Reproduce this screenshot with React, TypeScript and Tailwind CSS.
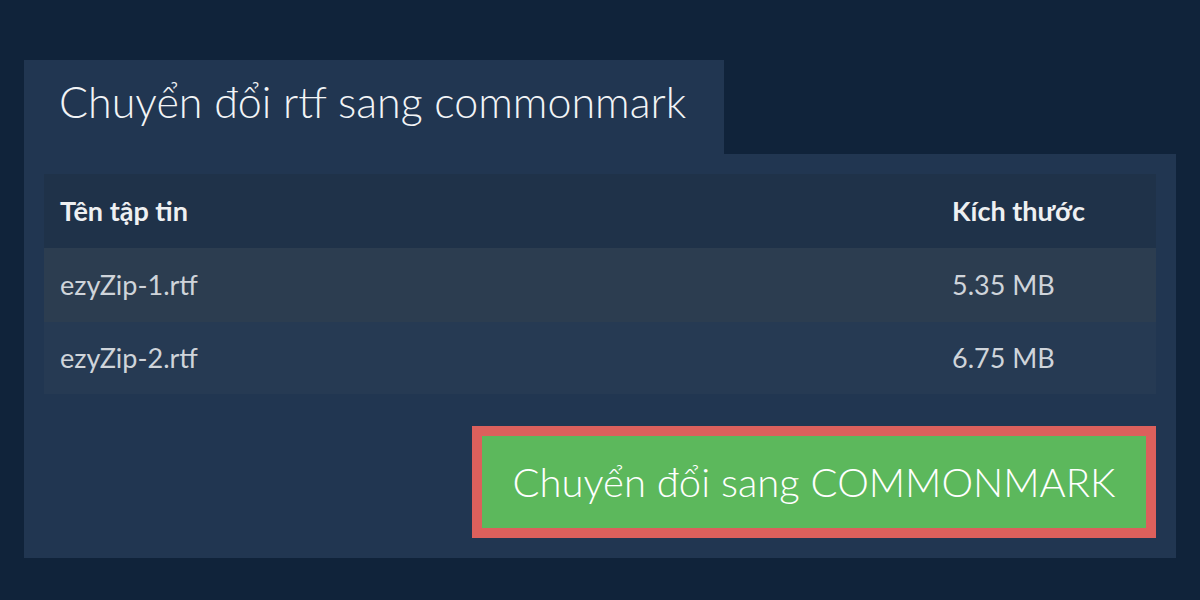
import React from 'react';

const files = [
    { name: 'ezyZip-1.rtf', size: '5.35 MB' },
    { name: 'ezyZip-2.rtf', size: '6.75 MB' },
];

const App: React.FC = () => {
    return (
        <div className="w-[1200px] h-[600px] bg-[#10233a] pt-[60px] px-[24px] font-['Lato','Noto_Sans',sans-serif]">
            {/* Tab heading */}
            <div className="w-[700px] h-[94px] bg-[#213651] pl-[35px] flex items-center">
                <h1 className="text-[43px] font-light text-[#f2f4f6] leading-none -mt-[12px]">Chuyển đổi rtf sang commonmark</h1>
            </div>

            {/* Panel */}
            <div className="w-[1152px] bg-[#213651] p-[20px] flex flex-col">
                <div className="w-full">
                    <div className="h-[74px] bg-[#1f3249] flex items-center text-[27px] font-bold text-[#eef0f2]">
                        <span className="pl-[16px] flex-1">Tên tập tin</span>
                        <span className="w-[204px]">Kích thước</span>
                    </div>
                    {files.map((f, i) => (
                        <div
                            key={f.name}
                            className={`flex items-center text-[27px] text-[#cfd4da] ${i === 0 ? 'h-[74px] bg-[#2c3d50]' : 'h-[72px] bg-[#263a53]'}`}
                        >
                            <span className="pl-[16px] flex-1">{f.name}</span>
                            <span className="w-[204px]">{f.size}</span>
                        </div>
                    ))}
                </div>

                <div className="flex justify-end mt-[32px]">
                    <button className="w-[684px] h-[112px] border-[10px] border-[#dc605c] bg-[#5cb85c] text-white text-[40px] font-light leading-none">
                        Chuyển đổi sang COMMONMARK
                    </button>
                </div>
            </div>
        </div>
    );
};

export default App;
